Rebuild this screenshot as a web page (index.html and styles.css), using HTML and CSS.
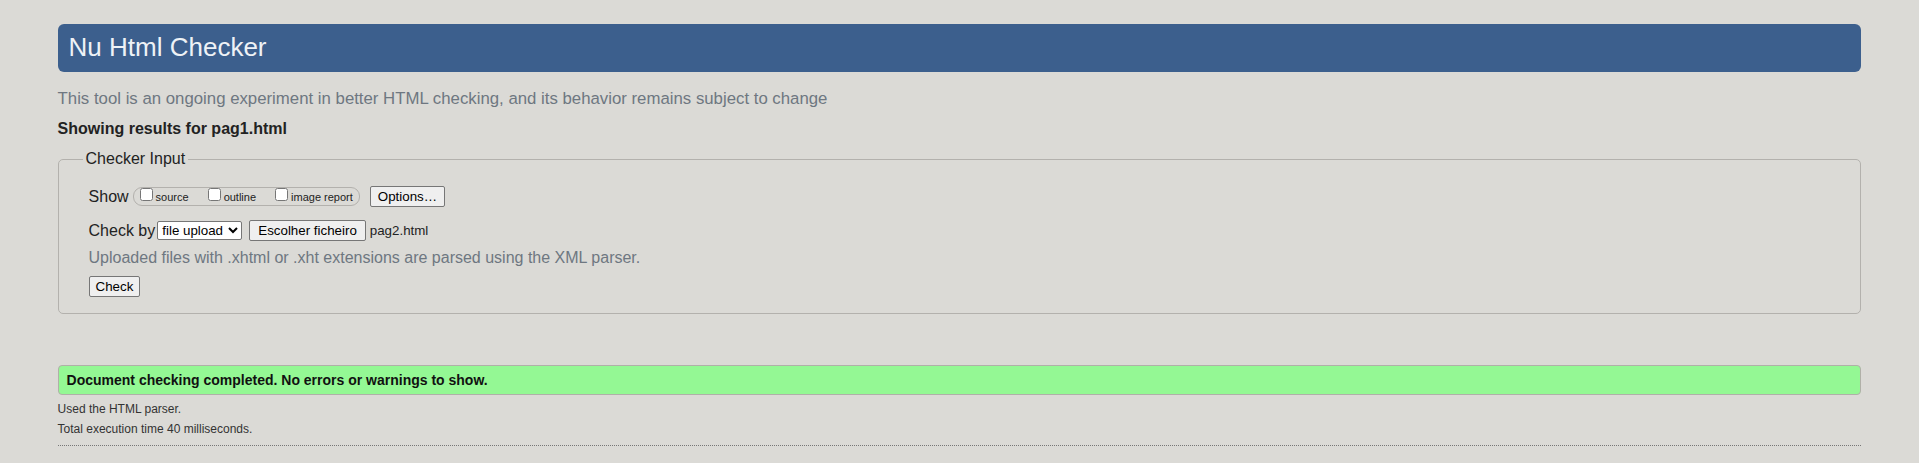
FILE: index.html
```html
<!DOCTYPE html>
<html lang="en">
<head>
<meta charset="utf-8">
<title>Nu Html Checker</title>
<link rel="stylesheet" href="styles.css">
</head>
<body>
<h1 class="title">Nu Html Checker</h1>
<p class="intro">This tool is an ongoing experiment in better HTML checking, and its behavior remains subject to change</p>
<p class="showing">Showing results for pag1.html</p>
<fieldset class="input-box">
  <legend class="legend">Checker Input</legend>
  <div class="row row-show">
    <span class="label">Show</span>
    <span class="pill">
      <label class="opt"><input type="checkbox" class="cb"><span class="opt-text">source</span></label>
      <label class="opt"><input type="checkbox" class="cb"><span class="opt-text">outline</span></label>
      <label class="opt opt-last"><input type="checkbox" class="cb"><span class="opt-text">image report</span></label>
    </span>
    <button type="button" class="btn btn-options">Options…</button>
  </div>
  <div class="row row-check">
    <span class="label">Check by</span>
    <select class="sel"><option>file upload</option></select>
    <button type="button" class="btn btn-file">Escolher ficheiro</button>
    <span class="filename">pag2.html</span>
  </div>
  <p class="note">Uploaded files with .xhtml or .xht extensions are parsed using the XML parser.</p>
  <div class="row row-submit">
    <button type="button" class="btn btn-check">Check</button>
  </div>
</fieldset>
<div class="success">Document checking completed. No errors or warnings to show.</div>
<p class="detail detail-first">Used the HTML parser.</p>
<p class="detail">Total execution time 40 milliseconds.</p>
<hr class="sep">
</body>
</html>
```
FILE: styles.css
```css
html, body {
  background: #dbdad6;
}
body {
  margin: 0;
  padding: 24px 3% 0;
  font-family: "Liberation Sans", Arial, sans-serif;
  font-size: 16px;
  color: #222;
}
.title {
  margin: 0;
  height: 48px;
  box-sizing: border-box;
  padding: 0 11px 2px;
  line-height: 46px;
  font-size: 26px;
  font-weight: normal;
  color: #eef2f6;
  background: #3c5f8d;
  border-radius: 6px;
}
.intro {
  margin: 18px 0 0;
  line-height: 18px;
  font-size: 16.8px;
  color: #6e7781;
}
.showing {
  margin: 12px 0 0;
  line-height: 18px;
  font-weight: bold;
  color: #222;
}
.input-box {
  margin: 12px 0 0;
  padding: 18px 30px 16px;
  border: 1px solid #b3b1ad;
  border-radius: 5px;
  min-width: 0;
}
.legend {
  padding: 0 3px;
  margin-left: -6px;
  line-height: 18px;
  color: #222;
}
.row {
  display: flex;
  align-items: center;
}
.label {
  line-height: 18px;
  margin-right: 2px;
}
.row-show .label {
  margin-right: 4px;
}
.pill {
  display: flex;
  align-items: flex-start;
  height: 19px;
  box-sizing: border-box;
  padding: 0 2px;
  border: 1px solid #b3b1ad;
  border-radius: 9px;
}
.opt {
  display: flex;
  align-items: flex-start;
  margin-right: 15px;
}
.opt-last {
  margin-right: 0;
}
.cb {
  width: 13px;
  height: 13px;
  margin: 0 3px 0 4px;
}
.opt-text {
  font-size: 11px;
  line-height: 13px;
  margin-top: 3px;
}
.opt-last .opt-text {
  margin-right: 4px;
}
.btn {
  height: 21px;
  box-sizing: border-box;
  padding: 0 6px;
  font-family: "Liberation Sans", Arial, sans-serif;
  font-size: 13.33px;
  color: #000;
  background: #efefef;
  border: 1px solid #767676;
  border-radius: 2px;
}
.btn-options {
  margin-left: 10px;
  padding: 0 7px;
}
.row-check {
  margin-top: 13px;
}
.sel {
  width: 85px;
  height: 19px;
  font-family: "Liberation Sans", Arial, sans-serif;
  font-size: 13.33px;
  color: #000;
  background: #fff;
  border: 1px solid #767676;
  border-radius: 2px;
  margin: 0;
}
.btn-file {
  margin-left: 7px;
  padding: 0 8px;
}
.filename {
  margin-left: 4px;
  font-size: 13.33px;
  color: #222;
}
.note {
  margin: 8px 0 0;
  line-height: 18px;
  color: #6e7781;
}
.row-submit {
  margin-top: 9px;
}
.success {
  margin-top: 51px;
  height: 30px;
  box-sizing: border-box;
  padding: 0 8px;
  line-height: 28px;
  font-size: 14px;
  font-weight: bold;
  color: #111;
  background: #94f894;
  border: 1px solid #b0b0a8;
  border-radius: 4px;
}
.detail {
  margin: 0;
  font-size: 12px;
  line-height: 20px;
  color: #333;
}
.detail-first {
  margin-top: 4px;
}
.sep {
  margin: 6px 0 0;
  height: 0;
  border: 0;
  border-top: 1px dotted #777;
}
```
